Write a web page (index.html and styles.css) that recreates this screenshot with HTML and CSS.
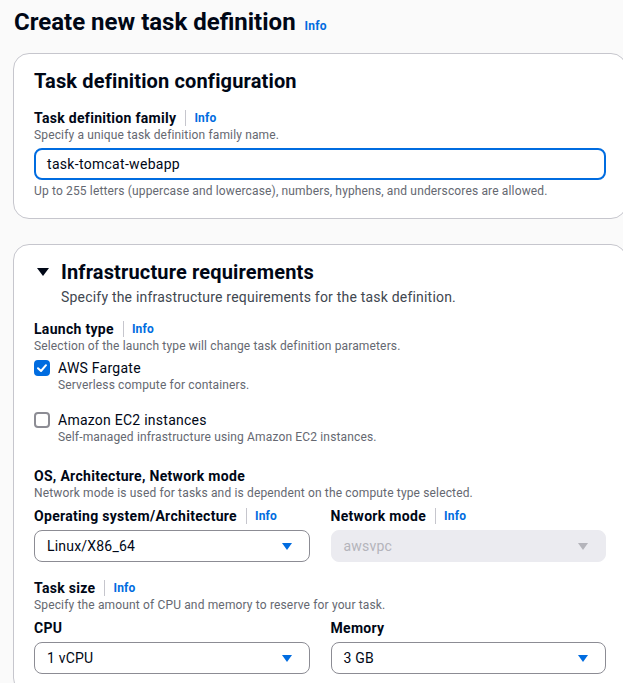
FILE: index.html
```html
<!DOCTYPE html>
<html lang="en">
<head>
<meta charset="utf-8">
<title>Create new task definition</title>
<link rel="stylesheet" href="styles.css">
</head>
<body>
<main class="page">
  <h1 class="page-title"><span>Create new task definition</span><a class="info info-title" href="#">Info</a></h1>

  <section class="card">
    <h2 class="card-title">Task definition configuration</h2>
    <div class="field">
      <div class="label-row"><span class="label">Task definition family</span><span class="sep"></span><a class="info" href="#">Info</a></div>
      <div class="desc">Specify a unique task definition family name.</div>
      <div class="input">task-tomcat-webapp</div>
      <div class="constraint">Up to 255 letters (uppercase and lowercase), numbers, hyphens, and underscores are allowed.</div>
    </div>
  </section>

  <section class="card card-2">
    <div class="exp-head">
      <svg class="exp-caret" width="12" height="8" viewBox="0 0 12 8"><polygon points="0,0 12,0 6,8" fill="#000716"/></svg>
      <h2 class="card-title">Infrastructure requirements</h2>
    </div>
    <div class="exp-desc">Specify the infrastructure requirements for the task definition.</div>

    <div class="field launch">
      <div class="label-row"><span class="label">Launch type</span><span class="sep"></span><a class="info" href="#">Info</a></div>
      <div class="desc">Selection of the launch type will change task definition parameters.</div>
      <div class="check-row">
        <span class="box checked"><svg width="16" height="16" viewBox="0 0 16 16"><polyline points="4,8.2 7,11 12,5.2" fill="none" stroke="#fff" stroke-width="2" stroke-linecap="round" stroke-linejoin="round"/></svg></span>
        <div class="check-text">
          <div class="check-label">AWS Fargate</div>
          <div class="check-desc">Serverless compute for containers.</div>
        </div>
      </div>
      <div class="check-row second">
        <span class="box"></span>
        <div class="check-text">
          <div class="check-label">Amazon EC2 instances</div>
          <div class="check-desc">Self-managed infrastructure using Amazon EC2 instances.</div>
        </div>
      </div>
    </div>

    <div class="field os">
      <div class="label-row"><span class="label">OS, Architecture, Network mode</span></div>
      <div class="desc">Network mode is used for tasks and is dependent on the compute type selected.</div>
      <div class="cols">
        <div class="col">
          <div class="label-row"><span class="label">Operating system/Architecture</span><span class="sep"></span><a class="info" href="#">Info</a></div>
          <div class="select"><span>Linux/X86_64</span><svg class="caret" width="10" height="7" viewBox="0 0 10 7"><polygon points="0,0 10,0 5,7" fill="#006ce0"/></svg></div>
        </div>
        <div class="col">
          <div class="label-row"><span class="label">Network mode</span><span class="sep"></span><a class="info" href="#">Info</a></div>
          <div class="select disabled"><span>awsvpc</span><svg class="caret" width="10" height="7" viewBox="0 0 10 7"><polygon points="0,0 10,0 5,7" fill="#b4b4bb"/></svg></div>
        </div>
      </div>
    </div>

    <div class="field size">
      <div class="label-row"><span class="label">Task size</span><span class="sep"></span><a class="info" href="#">Info</a></div>
      <div class="desc">Specify the amount of CPU and memory to reserve for your task.</div>
      <div class="cols">
        <div class="col">
          <div class="label-row"><span class="label">CPU</span></div>
          <div class="select"><span>1 vCPU</span><svg class="caret" width="10" height="7" viewBox="0 0 10 7"><polygon points="0,0 10,0 5,7" fill="#006ce0"/></svg></div>
        </div>
        <div class="col">
          <div class="label-row"><span class="label">Memory</span></div>
          <div class="select"><span>3 GB</span><svg class="caret" width="10" height="7" viewBox="0 0 10 7"><polygon points="0,0 10,0 5,7" fill="#006ce0"/></svg></div>
        </div>
      </div>
    </div>
  </section>
</main>
</body>
</html>
```

FILE: styles.css
```css
html, body {
  margin: 0;
  padding: 0;
  overflow: hidden;
  background: #fafafa;
}
body {
  font-family: Roboto, "Noto Sans", sans-serif;
  color: #000716;
}
.page {
  width: 614px;
  padding: 7px 0 40px 13px;
}
.page-title {
  display: flex;
  align-items: baseline;
  height: 30px;
  margin: 0 0 16px 1px;
  font-size: 24px;
  line-height: 30px;
  font-weight: 700;
}
.info {
  color: #006ce0;
  text-decoration: none;
  font-weight: 700;
  font-size: 12px;
  line-height: 16px;
  letter-spacing: 0.2px;
}
.info-title {
  margin-left: 9px;
}
.card {
  background: #fff;
  border: 1px solid #c6c6cd;
  border-radius: 16px;
  padding: 15px 20px 19px 20px;
}
.card-2 {
  margin-top: 25px;
}
.card-title {
  margin: 0;
  font-size: 20px;
  line-height: 24px;
  font-weight: 700;
  letter-spacing: 0.15px;
}
.field {
  margin-top: 16px;
}
.label-row {
  display: flex;
  align-items: center;
  height: 18px;
}
.label {
  font-size: 14px;
  line-height: 18px;
  font-weight: 700;
  letter-spacing: 0.3px;
}
.sep {
  width: 1px;
  height: 16px;
  background: #c6c6cd;
  margin: 0 8px 0 9px;
}
.desc, .constraint, .check-desc {
  font-size: 12px;
  line-height: 16px;
  color: #656871;
  letter-spacing: 0.15px;
}
.input {
  margin-top: 5px;
  height: 28px;
  border: 2px solid #006ce0;
  border-radius: 8px;
  padding: 0 11px;
  font-size: 14px;
  line-height: 28px;
  letter-spacing: 0.3px;
}
.constraint {
  margin-top: 3px;
}
.exp-head {
  display: flex;
  align-items: center;
}
.exp-caret {
  margin: 0 12px 0 3px;
  flex: none;
}
.exp-desc {
  margin: 4px 0 0 27px;
  font-size: 14px;
  line-height: 18px;
  color: #414750;
  letter-spacing: 0.2px;
}
.check-row {
  display: flex;
  align-items: flex-start;
  margin-top: 5px;
}
.check-row.second {
  margin-top: 18px;
}
.box {
  flex: none;
  width: 16px;
  height: 16px;
  border: 2px solid #8c8c94;
  border-radius: 4px;
  box-sizing: border-box;
  margin-top: 1px;
  margin-right: 8px;
  display: flex;
}
.box.checked {
  background: #006ce0;
  border-color: #006ce0;
}
.box.checked svg {
  margin: -2px;
}
.check-label {
  font-size: 14px;
  line-height: 18px;
  letter-spacing: 0.25px;
}
.field.launch {
  margin-top: 14px;
}
.field.os {
  margin-top: 22px;
}
.field.size {
  margin-top: 17px;
}
.cols {
  display: grid;
  grid-template-columns: 1fr 1fr;
  column-gap: 21px;
  margin-top: 6px;
}
.select {
  margin-top: 5px;
  height: 30px;
  border: 1px solid #8c8c94;
  border-radius: 8px;
  display: flex;
  align-items: center;
  justify-content: space-between;
  padding: 0 17px 0 12px;
  font-size: 14px;
  letter-spacing: 0.2px;
}
.select.disabled {
  background: #ebebf0;
  border-color: #ebebf0;
  color: #b4b4bb;
}
.caret {
  flex: none;
}
```
